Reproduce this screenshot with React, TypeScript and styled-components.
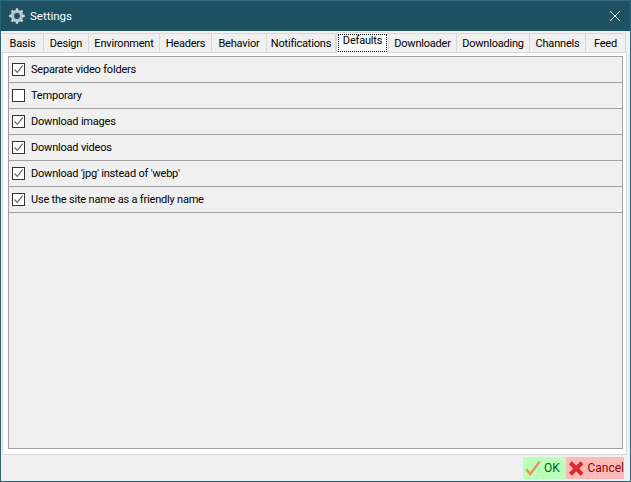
import React from 'react';
import styled, { createGlobalStyle } from 'styled-components';

const GlobalStyle = createGlobalStyle`
    html, body {
        margin: 0;
        padding: 0;
        background: #f0f0f0;
    }
`;

const Window = styled.div`
    display: flex;
    flex-direction: column;
    width: 631px;
    height: 482px;
    box-sizing: border-box;
    border: 1px solid #2a6479;
    border-top-color: #2f6a7e;
    background: #f0f0f0;
    font-family: Roboto, "Noto Sans", sans-serif;
    font-size: 11px;
    letter-spacing: -0.2px;
    color: #000;
    overflow: hidden;
`;

const TitleBar = styled.div`
    display: flex;
    align-items: center;
    flex: none;
    height: 30px;
    background: #1e5162;
    color: #fff;
    padding-left: 8px;
`;

const TitleText = styled.span`
    margin-left: 5px;
    font-size: 11.5px;
    letter-spacing: 0;
`;

const CloseButton = styled.div`
    display: flex;
    align-items: center;
    justify-content: center;
    margin-left: auto;
    margin-right: 3px;
    width: 24px;
    height: 30px;
`;

const TabStrip = styled.div`
    position: relative;
    z-index: 1;
    display: flex;
    flex: none;
    height: 21px;
    padding: 0 0 0 1px;
    align-items: flex-end;
`;

const Tab = styled.div<{ $width: number; $active?: boolean }>`
    flex: none;
    box-sizing: border-box;
    width: ${props => props.$width}px;
    height: ${props => (props.$active ? 21 : 19)}px;
    margin-bottom: ${props => (props.$active ? -1 : 0)}px;
    border: 1px solid #d9d9d9;
    border-bottom: 0;
    border-left-width: ${props => (props.$active ? 1 : 0)}px;
    background: ${props => (props.$active ? '#fff' : '#f0f0f0')};
    text-align: center;
    line-height: 20px;
    white-space: nowrap;
    padding: ${props => (props.$active ? 1 : 0)}px;
`;

const FocusLabel = styled.div`
    height: 16px;
    line-height: 12px;
    border: 1px dotted #000;
`;

const TabPanel = styled.div`
    display: flex;
    flex: 1;
    min-height: 0;
    margin: 0 3px 0 1px;
    padding: 3px 3px 5px 5px;
    background: #fff;
    border: 1px solid #d9d9d9;
`;

const Grid = styled.div`
    display: flex;
    flex-direction: column;
    flex: 1;
    border: 1px solid #a0a0a0;
    background: #f0f0f0;
`;

const Row = styled.label`
    display: flex;
    align-items: center;
    flex: none;
    box-sizing: border-box;
    height: 26px;
    padding: 0 0 0 3px;
    border-bottom: 1px solid #a0a0a0;
`;

const RowText = styled.span`
    margin-bottom: 1px;
`;

const Box = styled.span`
    display: flex;
    align-items: center;
    justify-content: center;
    flex: none;
    box-sizing: border-box;
    width: 13px;
    height: 13px;
    border: 1px solid #333;
    background: #fff;
    margin-right: 6px;
`;

const Footer = styled.div`
    display: flex;
    justify-content: flex-end;
    flex: none;
    height: 26px;
    padding: 2px 6px 0 0;
    box-sizing: border-box;
`;

const ActionButton = styled.div<{ $bg: string; $width: number; $color: string }>`
    display: flex;
    align-items: center;
    box-sizing: border-box;
    width: ${props => props.$width}px;
    height: 22px;
    padding-left: 2px;
    gap: 3px;
    background: ${props => props.$bg};
    color: ${props => props.$color};
    font-size: 12px;
    letter-spacing: 0;
`;

const GearIcon = () => (
    <svg width="16" height="16" viewBox="0 0 16 16">
        <circle cx="8" cy="8" r="4.6" fill="none" stroke="#b4c4cf" strokeWidth="3.4" />
        <g stroke="#cfd9e0" strokeWidth="2.4">
            <path d="M8 0.2v2.6M8 13.2v2.6M0.2 8h2.6M13.2 8h2.6M2.5 2.5l1.8 1.8M11.7 11.7l1.8 1.8M13.5 2.5l-1.8 1.8M4.3 11.7l-1.8 1.8" />
        </g>
    </svg>
);

const CloseIcon = () => (
    <svg width="12" height="12" viewBox="0 0 12 12">
        <path d="M1 1l10 10M11 1L1 11" stroke="#fff" strokeWidth="1" fill="none" />
    </svg>
);

const CheckMark = () => (
    <svg width="11" height="11" viewBox="0 0 11 11">
        <path d="M1.5 5.5l2.8 2.8 5.4-6.6" stroke="#666" strokeWidth="1.2" fill="none" />
    </svg>
);

const OkIcon = () => (
    <svg width="16" height="16" viewBox="0 0 16 16">
        <path d="M1.2 9.2L5.2 14L14.6 1.6" stroke="#f0905a" strokeWidth="2.4" fill="none" />
    </svg>
);

const CancelIcon = () => (
    <svg width="17" height="17" viewBox="0 0 17 17">
        <path d="M2.5 2.5L14.5 14.5M14.5 2.5L2.5 14.5" stroke="#dc2a33" strokeWidth="4.2" fill="none" />
    </svg>
);

const tabs = [
    { label: 'Basis', width: 42 },
    { label: 'Design', width: 45 },
    { label: 'Environment', width: 71 },
    { label: 'Headers', width: 52 },
    { label: 'Behavior', width: 55 },
    { label: 'Notifications', width: 69 },
    { label: 'Defaults', width: 53, active: true },
    { label: 'Downloader', width: 68 },
    { label: 'Downloading', width: 73 },
    { label: 'Channels', width: 56 },
    { label: 'Feed', width: 40 },
];

const options = [
    { label: 'Separate video folders', checked: true },
    { label: 'Temporary', checked: false },
    { label: 'Download images', checked: true },
    { label: 'Download videos', checked: true },
    { label: "Download 'jpg' instead of 'webp'", checked: true },
    { label: 'Use the site name as a friendly name', checked: true },
];

export default function App() {
    return (
        <>
            <GlobalStyle />
            <Window>
                <TitleBar>
                    <GearIcon />
                    <TitleText>Settings</TitleText>
                    <CloseButton>
                        <CloseIcon />
                    </CloseButton>
                </TitleBar>
                <TabStrip>
                    {tabs.map(tab => (
                        <Tab key={tab.label} $width={tab.width} $active={tab.active}>
                            {tab.active ? <FocusLabel>{tab.label}</FocusLabel> : tab.label}
                        </Tab>
                    ))}
                </TabStrip>
                <TabPanel>
                    <Grid>
                        {options.map(option => (
                            <Row key={option.label}>
                                <Box>{option.checked ? <CheckMark /> : null}</Box>
                                <RowText>{option.label}</RowText>
                            </Row>
                        ))}
                    </Grid>
                </TabPanel>
                <Footer>
                    <ActionButton $bg="#b9ffb9" $width={43} $color="#006400">
                        <OkIcon />
                        OK
                    </ActionButton>
                    <ActionButton $bg="#ffb9b9" $width={58} $color="#8b0000">
                        <CancelIcon />
                        Cancel
                    </ActionButton>
                </Footer>
            </Window>
        </>
    );
}
